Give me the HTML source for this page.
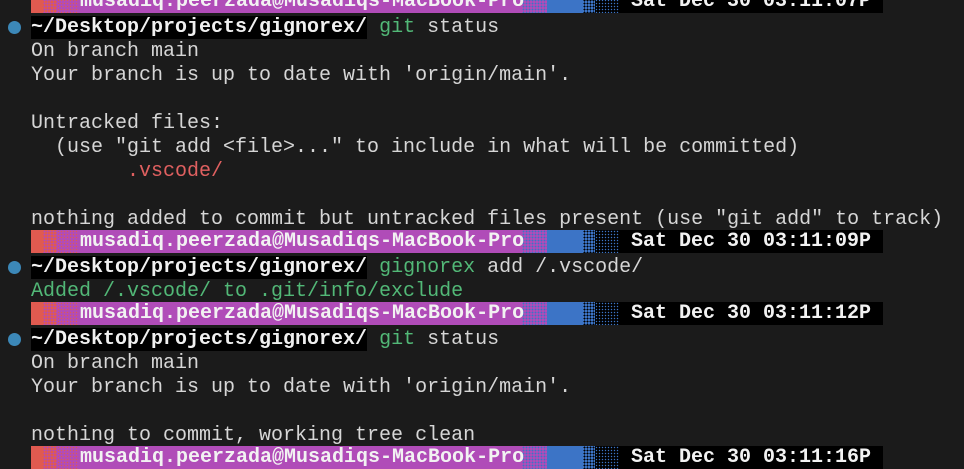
<!DOCTYPE html>
<html><head><meta charset="utf-8"><style>
body{margin:0;background:#1b1b1b;width:964px;height:468px;overflow:hidden;position:relative;font-family:"Liberation Mono","DejaVu Sans Mono",monospace;font-size:20px;color:#d6d6d6}
.row{position:absolute;left:31px;height:24px;line-height:24px;white-space:pre}
.bar{position:absolute;left:31px;width:852px;height:23px}
.bar .s{position:absolute;top:0;height:23px}
.bar .t{position:absolute;top:0;line-height:23px;font-weight:bold;color:#f2f2f2;white-space:pre}
.dot{position:absolute;left:8px;width:13px;height:13px;border-radius:50%;background:#3c88b8}
.p{background:#000;font-weight:bold;color:#f0f0f0}
.g{color:#52b877}.r{color:#e06060}
</style></head><body>
<div id="c"></div>
<script>
function bar(top,time){return `<div class="bar" style="top:${top}px">
<div class="s" style="left:0;width:12px;background:#e05a50"></div>
<div class="s" style="left:12px;width:14px;background:radial-gradient(circle,#b04cb8 45%,#e05a50 50%) 0 0/3px 3px"></div>
<div class="s" style="left:26px;width:22px;background:radial-gradient(circle,#e05a50 30%,#b04cb8 40%) 0 0/3px 3px"></div>
<div class="s" style="left:48px;width:468px;background:#b04cb8"></div>
<div class="s" style="left:491px;width:25px;background:radial-gradient(circle,#3c74c6 35%,#b04cb8 45%) 0 0/3px 3px"></div>
<div class="s" style="left:516px;width:36px;background:#3c74c6"></div>
<div class="s" style="left:552px;width:12px;background:radial-gradient(circle,#000 40%,#3c74c6 50%) 0 0/3px 3px"></div>
<div class="s" style="left:564px;width:24px;background:radial-gradient(circle,#3c74c6 30%,#000 40%) 0 0/3px 3px"></div>
<div class="s" style="left:588px;width:264px;background:#000"></div>
<div class="t" style="left:49px">musadiq.peerzada@Musadiqs-MacBook-Pro</div>
<div class="t" style="left:600px">Sat Dec 30 ${time}</div></div>`}
const rows=[
[0,'bar','03:11:07P'],
[1,'prompt','git status'],
[2,'On branch main'],
[3,"Your branch is up to date with 'origin/main'."],
[5,'Untracked files:'],
[6,'  (use "git add &lt;file&gt;..." to include in what will be committed)'],
[7,'        <span class="r">.vscode/</span>'],
[9,'nothing added to commit but untracked files present (use "git add" to track)'],
[10,'bar','03:11:09P'],
[11,'prompt','gignorex add /.vscode/'],
[12,'<span class="g">Added /.vscode/ to .git/info/exclude</span>'],
[13,'bar','03:11:12P'],
[14,'prompt','git status'],
[15,'On branch main'],
[16,"Your branch is up to date with 'origin/main'."],
[18,'nothing to commit, working tree clean'],
[19,'bar','03:11:16P']];
let h='';
for(const r of rows){const top=-10+24*r[0];
if(r[1]==='bar')h+=bar(top,r[2]);
else if(r[1]==='prompt'){h+=`<div class="dot" style="top:${top+7}px"></div><div class="row" style="top:${top+2}px"><span class="p">~/Desktop/projects/gignorex/</span> <span class="g">${r[2].split(' ')[0]}</span> ${r[2].split(' ').slice(1).join(' ')}</div>`}
else h+=`<div class="row" style="top:${top+2}px">${r[1]}</div>`;}
document.getElementById('c').innerHTML=h;
</script>
</body></html>
